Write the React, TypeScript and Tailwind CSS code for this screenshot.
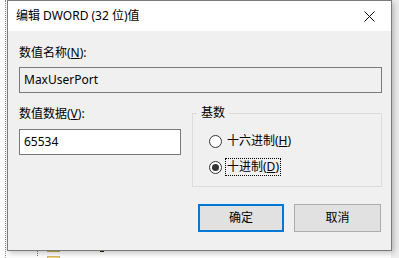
import React from "react";

const font = { fontFamily: '"Noto Sans", "Noto Sans CJK SC", sans-serif' };

function Radio({ checked }: { checked?: boolean }) {
  return (
    <svg width="13" height="13" viewBox="0 0 13 13" className="shrink-0">
      <circle cx="6.5" cy="6.5" r="6" fill="#fff" stroke="#333" strokeWidth="1" />
      {checked && <circle cx="6.5" cy="6.5" r="3.5" fill="#333" />}
    </svg>
  );
}

export default function App() {
  return (
    <div
      className="relative w-[399px] h-[258px] overflow-hidden bg-white text-[12px] leading-[16px] text-black"
      style={font}
    >
      {/* background window content */}
      <div className="absolute left-[5px] top-0 h-full border-l border-dotted border-[#888]" />
      <div className="absolute right-0 top-0 w-[8px] h-full bg-[#efefef]" />
      <div className="absolute left-[37px] top-[250px] h-[6px] border-l border-dotted border-[#777]" />
      <div className="absolute left-[47px] top-[249px] w-[13px] h-[3px] bg-[#e6c46a] border-b border-[#c8a84a]" />
      <div className="absolute left-[47px] top-[256px] w-[13px] h-[3px] bg-[#f3d98a] border border-[#d8b85a]" />
      <div className="absolute left-[100px] top-[250px] w-[4px] h-[2px] bg-[#401010]" />

      {/* dialog */}
      <div className="absolute left-[7px] top-0 w-[385px] h-[251px] flex flex-col border border-[#7a7a7a] bg-[#f0f0f0] shadow-[2px_2px_6px_rgba(0,0,0,0.25)]">
        <div className="h-[30px] shrink-0 flex items-center justify-between bg-white pl-[8px]">
          <span className="text-[12px]">编辑 DWORD (32 位)值</span>
          <svg width="11" height="11" viewBox="0 0 11 11" className="mr-[16px]">
            <path d="M0.5 0.5 L10.5 10.5 M10.5 0.5 L0.5 10.5" stroke="#111" strokeWidth="1" />
          </svg>
        </div>
        <div className="flex-1 flex flex-col pl-[11px] pr-[9px] pt-[14px]">
          <div className="h-[16px]">
            数值名称(<span className="underline">N</span>):
          </div>
          <div className="mt-[6px] h-[26px] border border-[#7a7a7a] flex items-center pl-[4px]">
            MaxUserPort
          </div>
          <div className="flex items-start">
            <div className="flex flex-col mt-[13px] w-[162px]">
              <div className="h-[16px]">
                数值数据(<span className="underline">V</span>):
              </div>
              <div className="mt-[7px] h-[26px] border border-[#7a7a7a] bg-white flex items-center pl-[4px]">
                65534
              </div>
            </div>
            <fieldset className="ml-[11px] mt-[12px] w-[190px] border border-[#dcdcdc] pt-[11px] pb-[10px] px-0">
              <legend className="ml-[4px] px-[4px] h-[16px] leading-[16px]">基数</legend>
              <div className="pl-[16px] flex flex-col">
                <div className="h-[18px] flex items-center">
                  <Radio />
                  <span className="ml-[3px] px-[1px] border border-transparent">
                    十六进制(<span className="underline">H</span>)
                  </span>
                </div>
                <div className="mt-[8px] h-[18px] flex items-center">
                  <Radio checked />
                  <span className="ml-[3px] px-[1px] border border-dotted border-black">
                    十进制(<span className="underline">D</span>)
                  </span>
                </div>
              </div>
            </fieldset>
          </div>
          <div className="mt-[17px] flex justify-end gap-[10px] pr-[1px]">
            <div className="w-[86px] h-[28px] border-2 border-[#0078d7] bg-[#e1e1e1] flex items-center justify-center">
              确定
            </div>
            <div className="w-[87px] h-[28px] border border-[#adadad] bg-[#e1e1e1] flex items-center justify-center">
              取消
            </div>
          </div>
        </div>
      </div>
    </div>
  );
}
